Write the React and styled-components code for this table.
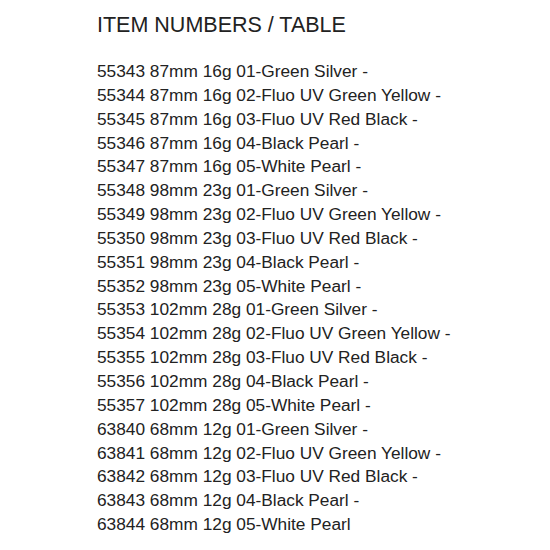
import React from 'react';
import styled, { createGlobalStyle } from 'styled-components';

const GlobalStyle = createGlobalStyle`
  body {
    margin: 0;
    background: #fff;
    font-family: "Liberation Sans", Arial, sans-serif;
  }
`;

const Wrapper = styled.div`
  width: 550px;
  height: 550px;
  padding: 11px 0 0 97px;
  box-sizing: border-box;
  color: #222;
`;

const Title = styled.h2`
  margin: 0 0 21px;
  font-size: 21.5px;
  font-weight: 400;
  line-height: 28px;
`;

const List = styled.div`
  font-size: 17.3px;
  line-height: 23.84px;
`;

const Row = styled.div`
  white-space: nowrap;
`;

const items = [
  '55343 87mm 16g 01-Green Silver -',
  '55344 87mm 16g 02-Fluo UV Green Yellow -',
  '55345 87mm 16g 03-Fluo UV Red Black -',
  '55346 87mm 16g 04-Black Pearl -',
  '55347 87mm 16g 05-White Pearl -',
  '55348 98mm 23g 01-Green Silver -',
  '55349 98mm 23g 02-Fluo UV Green Yellow -',
  '55350 98mm 23g 03-Fluo UV Red Black -',
  '55351 98mm 23g 04-Black Pearl -',
  '55352 98mm 23g 05-White Pearl -',
  '55353 102mm 28g 01-Green Silver -',
  '55354 102mm 28g 02-Fluo UV Green Yellow -',
  '55355 102mm 28g 03-Fluo UV Red Black -',
  '55356 102mm 28g 04-Black Pearl -',
  '55357 102mm 28g 05-White Pearl -',
  '63840 68mm 12g 01-Green Silver -',
  '63841 68mm 12g 02-Fluo UV Green Yellow -',
  '63842 68mm 12g 03-Fluo UV Red Black -',
  '63843 68mm 12g 04-Black Pearl -',
  '63844 68mm 12g 05-White Pearl',
];

export default function App() {
  return (
    <>
      <GlobalStyle />
      <Wrapper>
        <Title>ITEM NUMBERS / TABLE</Title>
        <List>
          {items.map((item) => (
            <Row key={item}>{item}</Row>
          ))}
        </List>
      </Wrapper>
    </>
  );
}
